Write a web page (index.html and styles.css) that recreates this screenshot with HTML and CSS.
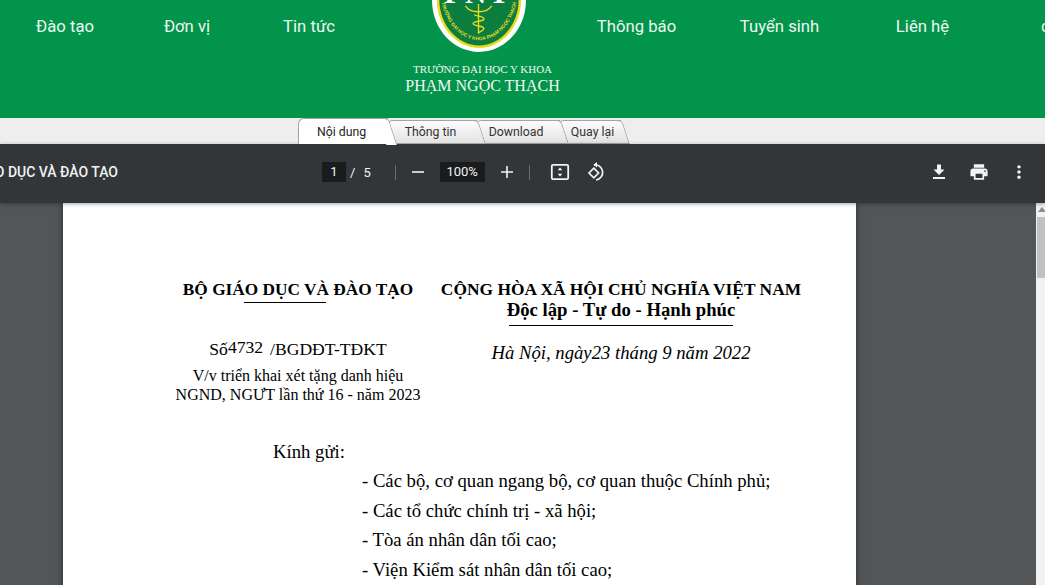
FILE: index.html
```html
<!DOCTYPE html>
<html lang="vi">
<head>
    <meta charset="UTF-8">
    <meta name="viewport" content="width=device-width, initial-scale=1.0">
    <title>Trường Đại học Y khoa Phạm Ngọc Thạch</title>
    <link rel="stylesheet" href="styles.css">
</head>
<body>

    <header class="site-header">
        <nav class="nav nav-left">
            <a class="nav-item">Đào tạo</a>
            <a class="nav-item">Đơn vị</a>
            <a class="nav-item">Tin tức</a>
        </nav>
        <div class="brand">
            <svg class="logo" width="94" height="52" viewBox="0 0 96 53">
                <defs>
                    <path id="ringText" d="M9,-4 C11,20 28,41 48,41 C68,41 85,20 87,-4"/>
                </defs>
                <path d="M0,0 C0,30 22,53 48,53 C74,53 96,30 96,0 Z" fill="#fff"/>
                <path d="M5,0 C5,27 25,49 48,49 C71,49 91,27 91,0 Z" fill="#e8dc1e"/>
                <path d="M7.500,0 C7.500,25 26,46.500 48,46.500 C70,46.500 88.500,25 88.500,0 Z" fill="#0b7d3f"/>
                <text class="logo-ring"><textPath href="#ringText" startOffset="50%" text-anchor="middle">TRƯỜNG ĐẠI HỌC Y KHOA PHẠM NGỌC THẠCH</textPath></text>
                <text class="logo-mark" x="47" y="3" text-anchor="middle">PNT</text>
                <g fill="none" stroke="#e8dc1e" stroke-width="1.400">
                    <path d="M47.500,4 V34"/>
                    <path d="M34,6 C38,12 44,12 47.500,12 C51,12 57,12 61,6"/>
                    <path d="M43,15 C46,17 52,16 53,19 C54,22 42,21 42,24 C42,27 53,26 53,29 C53,31 49,32 47,34"/>
                </g>
            </svg>
            <div class="brand-line">TRƯỜNG ĐẠI HỌC Y KHOA</div>
            <div class="brand-name">PHẠM NGỌC THẠCH</div>
        </div>
        <nav class="nav nav-right">
            <a class="nav-item wide">Thông báo</a>
            <a class="nav-item wide">Tuyển sinh</a>
            <a class="nav-item wide">Liên hệ</a>
            <a class="nav-item cut">c</a>
        </nav>
    </header>

    <div class="tab-bar">
        <a class="tab active t1">Nội dung</a>
        <a class="tab t2">Thông tin</a>
        <a class="tab t3">Download</a>
        <a class="tab t4">Quay lại</a>
    </div>

    <div class="pdf-toolbar">
        <div class="pdf-title"><span>BỘ GIÁO DỤC VÀ ĐÀO TẠO</span></div>
        <div class="pdf-center">
            <span class="num-box page-box">1</span>
            <span class="page-total">/</span>
            <span class="page-total count">5</span>
            <span class="divider first"></span>
            <svg class="tool minus" width="14" height="14" viewBox="0 0 14 14"><path d="M1 7h12" stroke="#f1f3f4" stroke-width="1.600"/></svg>
            <span class="num-box zoom-box">100%</span>
            <svg class="tool plus" width="14" height="14" viewBox="0 0 14 14"><path d="M1 7h12M7 1v12" stroke="#f1f3f4" stroke-width="1.600"/></svg>
            <span class="divider second"></span>
            <svg class="tool fit" width="20" height="18" viewBox="0 0 20 18">
                <rect x="1.800" y="1.800" width="16.400" height="14.400" rx="1.500" fill="none" stroke="#f1f3f4" stroke-width="1.800"/>
                <path d="M10 4.500l2.300 2.700H7.700zM10 13.500l2.300-2.700H7.700z" fill="#f1f3f4"/>
            </svg>
            <svg class="tool rotate" width="20" height="20" viewBox="0 0 20 20">
                <path d="M7 2.800 A7.600 7.600 0 1 1 9 18" fill="none" stroke="#f1f3f4" stroke-width="1.700"/>
                <path d="M10 0v5.500L6.400 2.800z" fill="#f1f3f4"/>
                <path d="M6.800 6.200l4.800 4.800-4.800 4.800L2 11z" fill="none" stroke="#f1f3f4" stroke-width="1.700"/>
            </svg>
        </div>
        <div class="pdf-actions">
            <svg width="24" height="24" viewBox="0 0 24 24" fill="#f1f3f4"><path d="M17.500 9.500h-3.500v-5h-4v5H6.500l5.500 5.500zM6 17v2h12v-2z"/></svg>
            <svg width="24" height="24" viewBox="-2 -2 28 28" fill="#f1f3f4"><path d="M19 8H5c-1.660 0-3 1.340-3 3v6h4v4h12v-4h4v-6c0-1.660-1.340-3-3-3zm-3 11H8v-5h8v5zm3-7c-.550 0-1-.450-1-1s.450-1 1-1 1 .450 1 1-.450 1-1 1zm-1-9H6v4h12V3z"/></svg>
            <svg width="24" height="24" viewBox="-2 -2 28 28" fill="#f1f3f4"><path d="M12 8c1.100 0 2-.900 2-2s-.900-2-2-2-2 .900-2 2 .900 2 2 2zm0 2c-1.100 0-2 .900-2 2s.900 2 2 2 2-.900 2-2-.900-2-2-2zm0 6c-1.100 0-2 .900-2 2s.900 2 2 2 2-.900 2-2-.900-2-2-2z"/></svg>
        </div>
    </div>

    <main class="viewer">
        <div class="pdf-area">
            <article class="pdf-page">
                <div class="doc-head">
                    <div class="doc-col left">
                        <div class="org">BỘ GIÁO DỤC VÀ ĐÀO TẠO</div>
                        <div class="rule short"></div>
                        <div class="doc-no">Số<span class="doc-num">4732</span>/BGDĐT-TĐKT</div>
                        <div class="doc-sub">V/v triển khai xét tặng danh hiệu</div>
                        <div class="doc-sub">NGND, NGƯT lần thứ 16 - năm 2023</div>
                    </div>
                    <div class="doc-col right">
                        <div class="org national">CỘNG HÒA XÃ HỘI CHỦ NGHĨA VIỆT NAM</div>
                        <div class="org motto">Độc lập - Tự do - Hạnh phúc</div>
                        <div class="rule long"></div>
                        <div class="doc-date">Hà Nội, ngày23 tháng 9 năm 2022</div>
                    </div>
                </div>
                <p class="to">Kính gửi:</p>
                <ul class="to-list">
                    <li>- Các bộ, cơ quan ngang bộ, cơ quan thuộc Chính phủ;</li>
                    <li>- Các tổ chức chính trị - xã hội;</li>
                    <li>- Tòa án nhân dân tối cao;</li>
                    <li>- Viện Kiểm sát nhân dân tối cao;</li>
                </ul>
            </article>
        </div>
        <div class="scrollbar">
            <span class="scroll-arrow"></span>
            <span class="scroll-thumb"></span>
        </div>
    </main>

</body>
</html>
```

FILE: styles.css
```css
html, body {
    height: 100%;
}
body {
    margin: 0;
    display: flex;
    flex-direction: column;
    overflow: hidden;
    font-family: Roboto, Arial, sans-serif;
    background-color: #525659;
}

/* green header */
.site-header {
    flex: none;
    height: 118px;
    display: flex;
    align-items: flex-start;
    overflow: hidden;
    background-color: #02944b;
    color: #eef7f1;
}
.nav {
    display: flex;
    flex: none;
    padding-top: 16px;
}
.nav-left {
    padding-left: 4px;
}
.nav-right {
    margin-left: 6px;
}
.nav-item {
    width: 122px;
    text-align: center;
    font-size: 16.700px;
    line-height: 22px;
    white-space: nowrap;
}
.nav-item.wide {
    width: 143px;
}
.nav-item.cut {
    width: 10px;
    margin-left: 47px;
    text-align: left;
}
.brand {
    flex: none;
    width: 160px;
    margin-left: 29px;
    display: flex;
    flex-direction: column;
    align-items: center;
    font-family: "Liberation Serif", "Times New Roman", serif;
    color: #f1f8f3;
}
.logo {
    display: block;
    flex: none;
}
.logo-ring {
    font-family: "Liberation Sans", Arial, sans-serif;
    font-size: 5px;
    font-weight: 700;
    fill: #e8dc1e;
}
.logo-mark {
    font-family: "Liberation Serif", serif;
    font-size: 30px;
    font-weight: 700;
    letter-spacing: 3px;
    fill: #fff;
}
.brand-line {
    margin: 10px 0 0 7px;
    font-size: 11px;
    line-height: 14px;
    white-space: nowrap;
}
.brand-name {
    margin: 1px 0 0 7px;
    font-size: 16px;
    line-height: 18px;
    white-space: nowrap;
}

/* tabs */
.tab-bar {
    flex: none;
    height: 26px;
    display: flex;
    align-items: flex-end;
    padding-left: 298px;
    background-color: #eeeeee;
}
.tab {
    position: relative;
    box-sizing: border-box;
    height: 24px;
    padding: 4px 4px 0 0;
    font-size: 12.300px;
    line-height: 15px;
    color: #333;
    text-align: center;
    background: linear-gradient(#fdfdfd, #e2e2e2);
    border: 1px solid #a3a3a3;
    border-right: 0;
    border-radius: 6px 0 0 0;
}
.tab::after {
    content: "";
    position: absolute;
    top: -1px;
    bottom: -1px;
    right: -5px;
    width: 10px;
    background: linear-gradient(#fdfdfd, #e2e2e2);
    border: 1px solid #a3a3a3;
    border-left: 0;
    border-radius: 0 5px 0 0;
    transform: skewX(18deg);
    z-index: -1;
}
.tab.active {
    height: 26px;
    padding-top: 6px;
    background: #fff;
    border-bottom: 0;
    color: #222;
}
.tab.active::after {
    background: #fff;
    border-bottom: 0;
}
.t1 { width: 90px; z-index: 4; }
.t2 { width: 90px; margin-left: -1px; z-index: 3; }
.t3 { width: 85px; margin-left: -2px; z-index: 2; }
.t4 { width: 63px; margin-left: -2px; padding: 4px 0 0 5px; z-index: 1; }

/* pdf toolbar */
.pdf-toolbar {
    flex: none;
    position: relative;
    z-index: 2;
    box-sizing: border-box;
    height: 59px;
    padding-bottom: 3px;
    display: flex;
    align-items: center;
    background-color: #323639;
    color: #f1f3f4;
    box-shadow: 0 1px 4px rgba(0, 0, 0, 0.35);
}
.pdf-title {
    width: 118px;
    overflow: hidden;
    display: flex;
    justify-content: flex-end;
    flex: none;
    font-size: 14px;
    font-weight: 500;
    white-space: nowrap;
}
.pdf-center {
    display: flex;
    align-items: center;
    margin-left: 204px;
    font-size: 13px;
}
.num-box {
    height: 20px;
    line-height: 20px;
    text-align: center;
    background-color: #191b1c;
}
.page-box {
    width: 24px;
}
.page-total {
    margin-left: 4px;
}
.page-total.count {
    margin-left: 8px;
}
.divider {
    width: 1px;
    height: 15px;
    background-color: #6b6f72;
}
.divider.first {
    margin-left: 24px;
}
.divider.second {
    margin-left: 15px;
}
.tool {
    flex: none;
}
.tool.minus {
    margin-left: 15px;
}
.zoom-box {
    width: 45px;
    margin-left: 15px;
}
.tool.plus {
    margin-left: 15px;
}
.tool.fit {
    margin-left: 20px;
}
.tool.rotate {
    margin-left: 17px;
}
.pdf-actions {
    margin-left: auto;
    margin-right: 14px;
    display: flex;
    gap: 16px;
}

/* viewer */
.viewer {
    flex: 1;
    min-height: 0;
    display: flex;
    overflow: hidden;
}
.pdf-area {
    flex: 1;
    padding-left: 63px;
    overflow: hidden;
}
.pdf-page {
    box-sizing: border-box;
    width: 793px;
    height: 600px;
    padding: 76px 0 0 97px;
    background-color: #fff;
    box-shadow: 0 0 6px rgba(0, 0, 0, 0.5);
    font-family: "Liberation Serif", "Times New Roman", serif;
    color: #000;
}
.doc-head {
    display: flex;
}
.doc-col {
    text-align: center;
    white-space: nowrap;
}
.doc-col.left {
    width: 276px;
}
.doc-col.right {
    width: 370px;
}
.org {
    font-size: 17.300px;
    line-height: 21px;
    font-weight: 700;
}
.org.national {
    font-size: 17.400px;
    line-height: 20px;
}
.org.motto {
    font-size: 18.700px;
}
.rule {
    height: 1px;
    background-color: #000;
}
.rule.short {
    width: 82px;
    margin: 2px 0 0 84px;
}
.rule.long {
    width: 224px;
    margin: 5px 0 0 73px;
}
.doc-no {
    margin-top: 35px;
    font-size: 17.600px;
    line-height: 22px;
}
.doc-num {
    position: relative;
    top: -2px;
    margin-right: 7px;
}
.doc-sub {
    font-size: 16px;
    line-height: 19px;
}
.doc-no + .doc-sub {
    margin-top: 6px;
}
.doc-date {
    margin-top: 15px;
    font-size: 18.700px;
    line-height: 24px;
    font-style: italic;
}
.to {
    margin: 36px 0 0 113px;
    font-size: 18.700px;
    line-height: 24px;
}
.to-list {
    list-style: none;
    margin: 2px 0 0 202px;
    padding: 0;
    font-size: 18.700px;
    line-height: 29.600px;
    white-space: nowrap;
}

/* scrollbar */
.scrollbar {
    flex: none;
    width: 9px;
    display: flex;
    flex-direction: column;
    background-color: #f1f1f1;
}
.scroll-arrow {
    width: 0;
    height: 0;
    margin: 4px 0 0 2px;
    border-left: 4px solid transparent;
    border-right: 4px solid transparent;
    border-bottom: 5px solid #8a8a8a;
}
.scroll-thumb {
    height: 61px;
    margin: 5px 0 0 1px;
    background-color: #c1c1c1;
}
```
